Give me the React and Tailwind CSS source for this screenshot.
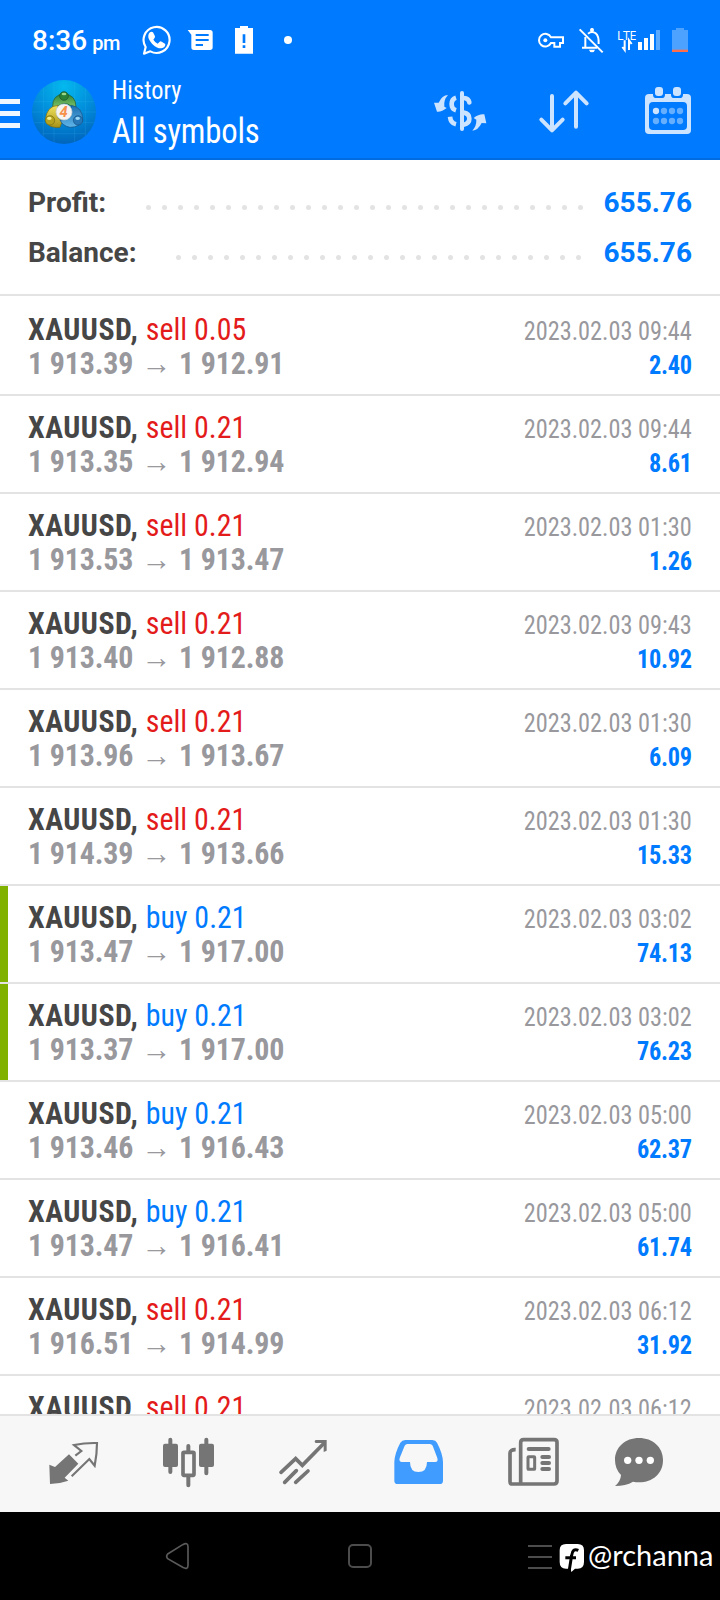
import React from 'react';

const deals = [
  { side: 'sell', volume: '0.05', open: '1 913.39', close: '1 912.91', time: '2023.02.03 09:44', profit: '2.40' },
  { side: 'sell', volume: '0.21', open: '1 913.35', close: '1 912.94', time: '2023.02.03 09:44', profit: '8.61' },
  { side: 'sell', volume: '0.21', open: '1 913.53', close: '1 913.47', time: '2023.02.03 01:30', profit: '1.26' },
  { side: 'sell', volume: '0.21', open: '1 913.40', close: '1 912.88', time: '2023.02.03 09:43', profit: '10.92' },
  { side: 'sell', volume: '0.21', open: '1 913.96', close: '1 913.67', time: '2023.02.03 01:30', profit: '6.09' },
  { side: 'sell', volume: '0.21', open: '1 914.39', close: '1 913.66', time: '2023.02.03 01:30', profit: '15.33' },
  { side: 'buy', volume: '0.21', open: '1 913.47', close: '1 917.00', time: '2023.02.03 03:02', profit: '74.13', marked: true },
  { side: 'buy', volume: '0.21', open: '1 913.37', close: '1 917.00', time: '2023.02.03 03:02', profit: '76.23', marked: true },
  { side: 'buy', volume: '0.21', open: '1 913.46', close: '1 916.43', time: '2023.02.03 05:00', profit: '62.37' },
  { side: 'buy', volume: '0.21', open: '1 913.47', close: '1 916.41', time: '2023.02.03 05:00', profit: '61.74' },
  { side: 'sell', volume: '0.21', open: '1 916.51', close: '1 914.99', time: '2023.02.03 06:12', profit: '31.92' },
  // only the top of this one shows above the tab bar
  { side: 'sell', volume: '0.21', time: '2023.02.03 06:12' },
];

const Icon = ({ box, className, children }) => (
  <svg viewBox={box} className={`block shrink-0 ${className}`} fill="none">
    {children}
  </svg>
);

const StatusBar = () => (
  <div className="flex h-[76px] pt-6 text-white">
    <div className="flex h-8 w-[109px] ml-[32px] mt-px items-baseline leading-8 font-medium whitespace-nowrap">
      <span className="text-[28px]">8:36</span>
      <span className="text-[20px] ml-[5px] tracking-[-0.4px]">pm</span>
    </div>
    {/* whatsapp */}
    <Icon box="423 72 90 96" className="w-[30px] h-8">
      <path d="M432 161 L437 141 A39 39 0 1 1 451 154 Z" stroke="#fff" strokeWidth="6.500" strokeLinejoin="round" />
      <path d="M450 97 q4 -4 9 0 l6 12 q1 4 -5 10 q5 8 13 12 l6 -6 q3 -2 6 0 l11 7 q0 11 -12 13 q-15 0 -28 -14 q-13 -14 -11 -25 q1 -6 5 -9Z" fill="#fff" />
    </Icon>
    {/* messages */}
    <Icon box="561 72 81 96" className="w-[27px] h-8 ml-4">
      <path d="M563 90 H630 q8 0 8 8 V142 q0 8 -8 8 H582 q-8 0 -8 -8 V104 Z" fill="#fff" />
      <path d="M587 105 H626 M587 120 H626 M587 135 H609" stroke="#007aff" strokeWidth="6" />
    </Icon>
    {/* battery warning */}
    <Icon box="702 72 60 96" className="w-5 h-8 ml-5">
      <path d="M705 84 H720 V78 H744 V84 H759 V161 H705 Z" fill="#fff" />
      <path d="M728 103 h8 v26 h-8z M728 136 h8 v8 h-8z" fill="#007aff" />
    </Icon>
    <span className="size-2 mt-3 ml-[30px] rounded-full bg-white" />
    <div className="flex ml-auto mr-[31px]">
      {/* vpn key */}
      <Icon box="531 72 84 96" className="w-7 h-8">
        <path d="M573 112 A19 19 0 1 0 573 129 H583 V140 H600 V129 H609 V112 Z" stroke="#fff" strokeWidth="6" />
        <circle cx="556" cy="120.500" r="6" fill="#fff" />
      </Icon>
      {/* bell off */}
      <Icon box="654 72 78 96" className="w-[26px] h-8 ml-[13px]">
        <path d="M676 111 V143 M666 143 H711 M684 101 Q696 91 707 100 Q717 108 716 132 M696 85 V95" stroke="#fff" strokeWidth="6" />
        <circle cx="696" cy="90" r="6" fill="#fff" />
        <path d="M687 149 H705 Q703 157 696 157 Q689 157 687 149Z" fill="#fff" />
        <path d="M659 88 L728 157" stroke="#fff" strokeWidth="6" />
      </Icon>
      <div className="relative ml-[13px] w-5 h-8 text-white">
        <span className="absolute left-0 top-[6px] text-[12.500px] leading-3 tracking-[-0.4px] font-['Open_Sans']">LTE</span>
        <Icon box="771 72 60 96" className="w-5 h-8">
          <path d="M794 121 V150 L787 141 M807 150 V121 L815 132" stroke="#fff" strokeWidth="6" />
        </Icon>
      </div>
      <Icon box="831 72 72 96" className="w-6 h-8">
        <path d="M834 126h12v24h-12z M852 114h12v36h-12z M870 102h12v48h-12z" fill="#fff" />
        <path d="M888 90h12v60h-12z" fill="#5ba8ff" />
      </Icon>
      <Icon box="933 72 54 96" className="w-[18px] h-8 ml-[10px]">
        <path d="M936 90 H948 V84 H972 V90 H984 V150 H936 Z" fill="#4da2ff" />
        <path d="M936 149h48v7h-48z" fill="#ff6e4a" />
      </Icon>
    </div>
  </div>
);

const AppLogo = () => (
  <svg viewBox="0 0 192 192" className="block shrink-0 size-16 ml-3">
    <defs>
      <radialGradient id="sky" cx="0.5" cy="0.1" r="0.95">
        <stop offset="0" stopColor="#04b9ee" />
        <stop offset="0.5" stopColor="#018ddb" />
        <stop offset="1" stopColor="#0061b8" />
      </radialGradient>
      <linearGradient id="green" x1="0" y1="0" x2="0" y2="1">
        <stop offset="0" stopColor="#2f8238" />
        <stop offset="1" stopColor="#7dc46a" />
      </linearGradient>
      <linearGradient id="yellow" x1="0" y1="0" x2="0" y2="1">
        <stop offset="0" stopColor="#f0e35c" />
        <stop offset="1" stopColor="#a8921a" />
      </linearGradient>
      <linearGradient id="blue" x1="0" y1="0" x2="0" y2="1">
        <stop offset="0" stopColor="#1d6fb0" />
        <stop offset="1" stopColor="#5fb6ea" />
      </linearGradient>
    </defs>
    <circle cx="96" cy="96" r="96" fill="url(#sky)" />
    <path d="M34 22V170M66 5V187M128 5V187M160 24V168M6 65H186M0 96H192M6 128H186M30 161H162" stroke="#58c8ff" strokeOpacity="0.22" strokeWidth="2" />
    <path d="M62 82 Q60 44 96 42 Q132 44 132 82 L118 78 Q96 62 76 80 Z" fill="url(#green)" stroke="#1d5a2c" strokeWidth="2" />
    <path d="M78 76 Q44 78 40 120 Q48 146 84 142 L92 120 Q66 118 78 76Z" fill="url(#yellow)" stroke="#75690f" strokeWidth="2" />
    <path d="M118 76 Q152 82 152 118 Q146 142 114 142 Q92 138 84 120 Q120 124 118 76Z" fill="url(#blue)" stroke="#175283" strokeWidth="2" />
    <circle cx="96" cy="48" r="13" fill="#2a8138" stroke="#1a5127" strokeWidth="2" />
    <ellipse cx="96" cy="42" rx="7" ry="4" fill="#9bd58c" />
    <circle cx="54" cy="121" r="14" fill="#b5a31f" stroke="#75690f" strokeWidth="2" />
    <ellipse cx="52" cy="115" rx="7" ry="5" fill="#f6ef8d" />
    <circle cx="138" cy="121" r="14" fill="#2678b8" stroke="#175283" strokeWidth="2" />
    <ellipse cx="137" cy="115" rx="7" ry="5" fill="#9ad6f6" />
    <circle cx="96" cy="96" r="24" fill="#f6f4f2" stroke="#c9d2d2" strokeWidth="2" />
    <text x="95" y="111" textAnchor="middle" fontSize="44" fontWeight="700" fontStyle="italic" fontFamily="Roboto" fill="#f5914a">4</text>
  </svg>
);

const Header = () => (
  <header className="h-40 shrink-0 bg-[#007aff] border-b-2 border-[#006ce0] font-['Roboto']">
    <StatusBar />
    <div className="flex pt-1">
      <div className="flex flex-col gap-[7px] w-5 pt-[19px]">
        <span className="h-[5px] bg-[#eef6ff]" />
        <span className="h-[5px] bg-[#eef6ff]" />
        <span className="h-[5px] bg-[#eef6ff]" />
      </div>
      <AppLogo />
      <div className="ml-4 mt-[-6px] text-white font-['Roboto_Condensed'] whitespace-nowrap origin-left scale-x-[0.935]">
        <div className="text-[26px] leading-8 tracking-[0.15px]">History</div>
        <div className="text-[35px] leading-[44px] mt-1 tracking-[-0.2px]">All symbols</div>
      </div>
      <div className="flex ml-auto mr-7">
        {/* symbol filter */}
        <Icon box="219 240 162 180" className="w-[54px] h-[60px]">
          <path d="M306 279V387" stroke="#cce4ff" strokeWidth="12" strokeLinecap="round" />
          <path d="M288 293 Q275 297 275 312 Q275 327 288 331" stroke="#cce4ff" strokeWidth="14" />
          <path d="M311 294 Q326 295 328 307" stroke="#cce4ff" strokeWidth="14" strokeLinecap="round" />
          <path d="M288 373 Q272 369 270 350" stroke="#cce4ff" strokeWidth="14" />
          <path d="M311 338 Q328 341 328 356 Q328 370 311 374" stroke="#cce4ff" strokeWidth="14" />
          <path d="M264 285 Q246 286 236 308 L222 308 L231 335 Q246 336 260 324 L253 320 Q250 300 264 285Z" fill="#cce4ff" />
          <path d="M337 392 Q354 391 365 369 L379 370 L373 343 Q357 341 341 354 L349 359 Q350 377 337 392Z" fill="#cce4ff" />
        </Icon>
        {/* sort */}
        <Icon box="534 240 156 180" className="w-[52px] h-[60px] ml-[51px]">
          <path d="M576 288V390M544 359L576 391L608 359M648 380V279M616 310L648 278L680 310" stroke="#cce4ff" strokeWidth="12" strokeLinecap="round" strokeLinejoin="round" />
        </Icon>
        {/* calendar */}
        <Icon box="852 240 144 180" className="w-12 h-[60px] ml-[54px]">
          <rect x="855" y="282" width="138" height="120" rx="12" fill="#cce4ff" />
          <rect x="867" y="306" width="114" height="84" rx="12" fill="#007aff" />
          <path d="M879 280h36v4q0 10 -10 10h-16q-10 0-10-10z M933 280h36v4q0 10 -10 10h-16q-10 0-10-10z" fill="#007aff" />
          <rect x="885" y="261" width="24" height="27" rx="9" fill="#cce4ff" />
          <rect x="939" y="261" width="24" height="27" rx="9" fill="#cce4ff" />
          <circle cx="888" cy="333" r="9.500" fill="#cce4ff" />
          <g fill="#66afff">
            <circle cx="912" cy="333" r="9.500" />
            <circle cx="936" cy="333" r="9.500" />
            <circle cx="960" cy="333" r="9.500" />
            <circle cx="888" cy="363" r="9.500" />
            <circle cx="912" cy="363" r="9.500" />
            <circle cx="936" cy="363" r="9.500" />
            <circle cx="960" cy="363" r="9.500" />
          </g>
        </Icon>
      </div>
    </div>
  </header>
);

const Dots = ({ count }) => (
  <div className="flex gap-[11px] mt-[9px]">
    {Array.from({ length: count }, (_, i) => (
      <span key={i} className="size-[5px] rounded-full bg-[#e3e3e4]" />
    ))}
  </div>
);

const Summary = () => (
  <section className="h-34 shrink-0 pt-[18px] px-7 border-b-2 border-[#e3e3e4] font-['Roboto'] font-bold text-[28px] leading-[50px]">
    <div className="flex items-center h-[50px]">
      <span className="w-[117.500px] text-[#464646]">Profit:</span>
      <Dots count={28} />
      <span className="ml-auto text-[#007aff]">655.76</span>
    </div>
    <div className="flex items-center h-[50px]">
      <span className="w-[147.500px] text-[#464646]">Balance:</span>
      <Dots count={26} />
      <span className="ml-auto text-[#007aff]">655.76</span>
    </div>
  </section>
);

const DealRow = ({ deal }) => (
  <div className="flex h-[98px] shrink-0 border-b-2 border-[#e3e3e4] whitespace-nowrap">
    <div className={`w-2 ${deal.marked ? 'bg-[#80b000]' : ''}`} />
    <div className="flex-1 flex justify-between pl-5 pr-7 pt-[14px]">
      <div className="text-[32px] leading-[34px] origin-left scale-x-[0.935]">
        <div className="flex">
          <span className="w-[126px] font-bold tracking-[0.5px] text-[#464646]">XAUUSD,</span>
          <span className={deal.side === 'sell' ? 'text-[#e41b1b]' : 'text-[#007aff]'}>{deal.side} {deal.volume}</span>
        </div>
        {deal.open && (
          <div className="flex font-bold tracking-[-0.15px] text-[#98989d]">
            <span className="w-[121px]">{deal.open}</span>
            <span className="w-[40.500px]">→</span>
            <span>{deal.close}</span>
          </div>
        )}
      </div>
      <div className="text-right text-[26px] leading-[34px] pt-[2px] origin-right scale-x-[0.935]">
        <div className="text-[#98989d]">{deal.time}</div>
        <div className="font-bold tracking-[-0.3px] text-[#007aff]">{deal.profit}</div>
      </div>
    </div>
  </div>
);

const TabBar = () => (
  <nav className="flex h-[98px] shrink-0 pt-[18px] pl-12 bg-[#f7f7f7] border-t-2 border-[#e3e3e4]">
    {/* quotes */}
    <Icon box="144 192 156 168" className="w-[52px] h-14">
      <path d="M148 284 L165 291 L207 253 L235 281 L194 323 L205 332 Q180 341 150 342 Z" fill="#757575" />
      <path d="M226 257 L244 243 L222 225 Q256 218 291 219 Q291 252 284 287 L268 267 L215 319" stroke="#757575" strokeWidth="6.500" />
    </Icon>
    {/* chart */}
    <Icon box="486 192 159 168" className="w-[53px] h-14 ml-[62px]">
      <path d="M511 209V306M619 209V310M565 228V245M565 320V346" stroke="#757575" strokeWidth="12" strokeLinecap="round" />
      <rect x="489" y="221" width="45" height="70" rx="6" fill="#757575" />
      <rect x="597" y="221" width="45" height="70" rx="6" fill="#757575" />
      <rect x="549" y="247" width="33" height="69" rx="3" stroke="#757575" strokeWidth="11" />
    </Icon>
    {/* trade */}
    <Icon box="834 192 150 168" className="w-[50px] h-14 ml-[63px]">
      <path d="M843 307L887 266L907 286L972 220M854 337L889 302M887 337L924 303" stroke="#757575" strokeWidth="11" strokeLinecap="round" />
      <path d="M947 210H980V242L971 246V219H947Q941 214 947 210Z" fill="#757575" />
    </Icon>
    {/* history, the open tab */}
    <Icon box="99 192 153 168" className="w-[51px] h-14 ml-[65px]">
      <path fillRule="evenodd" d="M136 210H217Q227 210 231 218Q248 250 249 276V332Q249 342 239 342H113Q103 342 103 332V276Q104 250 121 218Q126 210 136 210Z M142 222Q137 222 134 227L119 264Q116 276 126 276H150Q150 306 175 306Q201 306 201 276H226Q235 276 232 264L218 227Q215 222 210 222Z" fill="#409cff" />
    </Icon>
    {/* news */}
    <Icon box="441 192 159 168" className="w-[53px] h-14 ml-[63px]">
      <path d="M467 239Q450 238 450 250V335Q450 342 458 342H582Q591 342 591 333V217Q591 209 582 209H491Q482 209 482 218V338" stroke="#757575" strokeWidth="11" />
      <path d="M506 237H566M547 261H567M547 279H567M547 297H567" stroke="#757575" strokeWidth="12" strokeLinecap="round" />
      <rect x="504" y="260" width="20" height="38" rx="2" stroke="#757575" strokeWidth="9" />
    </Icon>
    {/* chat */}
    <Icon box="762 192 150 168" className="w-[50px] h-14 ml-[54px]">
      <path d="M837 204C878 204 909 231 909 270C909 311 878 337 837 337Q827 337 819 335Q797 348 765 348Q782 334 783 315Q765 297 765 270C765 231 796 204 837 204Z" fill="#757575" />
      <circle cx="803" cy="271" r="11" fill="#fff" />
      <circle cx="837" cy="271" r="11" fill="#fff" />
      <circle cx="871" cy="271" r="11" fill="#fff" />
    </Icon>
  </nav>
);

const SystemBar = () => (
  <div className="flex h-[88px] shrink-0 items-center bg-black pl-[165px]">
    <Icon box="495 513 75 90" className="w-[25px] h-[30px]">
      <path d="M503 552L548 524Q564 516 564 530V586Q564 600 548 592L503 566Q497 559 503 552Z" stroke="#5a5a5a" strokeWidth="5" />
    </Icon>
    <span className="size-6 ml-[158px] rounded-[5px] border-2 border-[#4c4c4c]" />
    <div className="flex flex-col gap-[9px] w-6 ml-[156px] mt-[2px]">
      <span className="h-[2px] bg-[#4c4c4c]" />
      <span className="h-[2px] bg-[#4c4c4c]" />
      <span className="h-[2px] bg-[#4c4c4c]" />
    </div>
    <Icon box="597 513 78 96" className="w-[26px] h-8 ml-[7px] mt-px">
      <path d="M618 522H653Q672 522 672 541V576Q672 596 653 596H645L634 606L632 596H618Q599 596 599 576V541Q599 522 618 522Z" fill="#fff" />
      <path d="M655 541Q638 533 635 556L627 606M616 563H648" stroke="#000" strokeWidth="9" />
    </Icon>
    <span className="ml-[3px] mt-[-3px] text-[29px] text-white font-['Lato']">@rchanna</span>
  </div>
);

const App = () => (
  <div className="flex flex-col w-[720px] h-[1600px] overflow-hidden bg-white">
    <Header />
    <Summary />
    <main className="flex-1 min-h-0 overflow-hidden flex flex-col pt-[2px] font-['Roboto_Condensed']">
      {deals.map((deal, i) => (
        <DealRow key={i} deal={deal} />
      ))}
    </main>
    <TabBar />
    <SystemBar />
  </div>
);

export default App;
